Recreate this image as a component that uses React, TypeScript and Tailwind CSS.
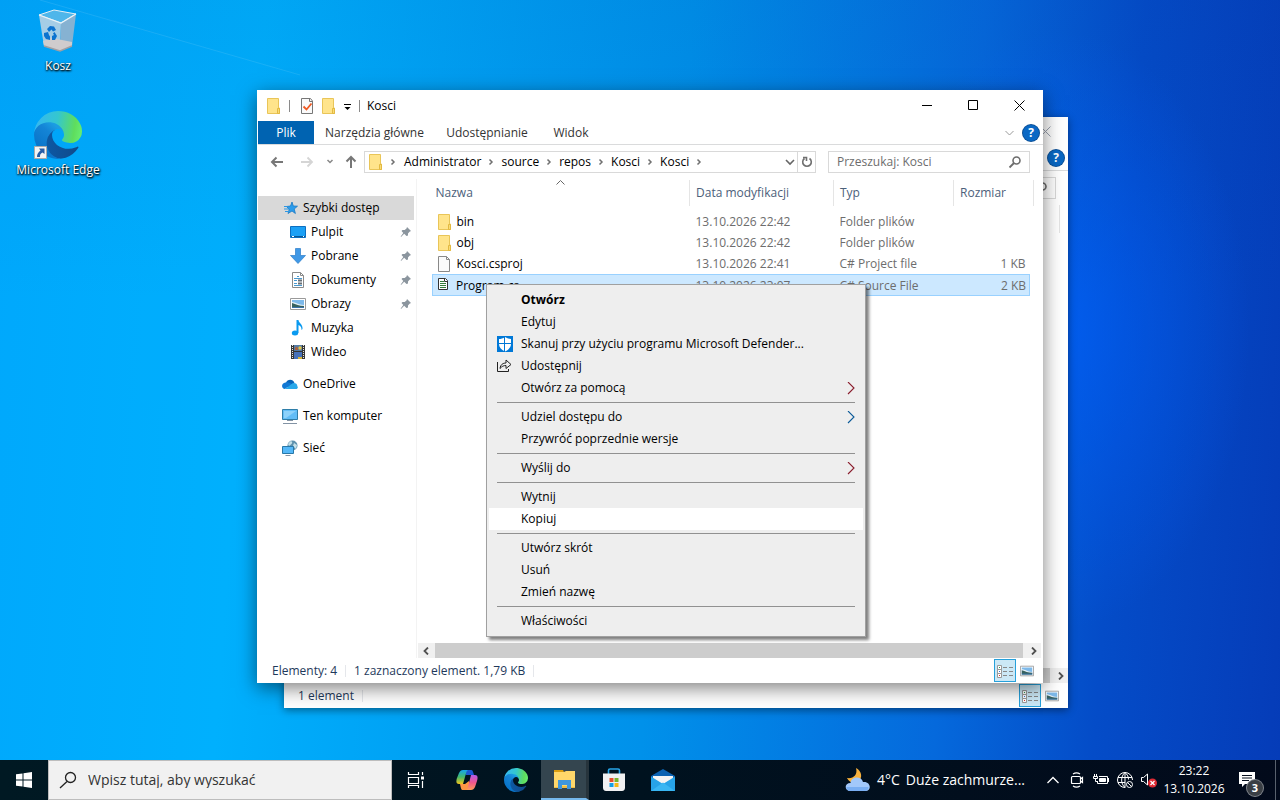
import { useId, type ReactNode } from 'react';

/* ---------- Icons ---------- */

function EdgeLogo({ className }: { className?: string }) {
  const id = useId();
  return (
    <svg viewBox="0 0 256 256" className={className} aria-hidden="true">
      <defs>
        <linearGradient id={`${id}a`} x1="60" y1="180" x2="235" y2="180" gradientUnits="userSpaceOnUse">
          <stop offset="0" stopColor="#0c59a4" />
          <stop offset="1" stopColor="#114a8b" />
        </linearGradient>
        <linearGradient id={`${id}b`} x1="140" y1="100" x2="40" y2="220" gradientUnits="userSpaceOnUse">
          <stop offset="0" stopColor="#1b9de2" />
          <stop offset="0.3" stopColor="#1484d6" />
          <stop offset="1" stopColor="#0873c8" />
        </linearGradient>
        <linearGradient id={`${id}c`} x1="10" y1="70" x2="250" y2="110" gradientUnits="userSpaceOnUse">
          <stop offset="0" stopColor="#35b8f0" />
          <stop offset="0.45" stopColor="#34c7cf" />
          <stop offset="0.85" stopColor="#5fdd5d" />
          <stop offset="1" stopColor="#66eb6e" />
        </linearGradient>
      </defs>
      <path
        fill={`url(#${id}a)`}
        d="M231 190.5c-3.4 1.8-6.9 3.4-10.5 4.7a101.8 101.8 0 0 1-35.9 6.5c-47.3 0-88.5-32.5-88.5-74.3a31.5 31.5 0 0 1 16.4-27.3c-42.8 1.8-53.8 46.4-53.8 72.5 0 74 68.1 81.4 82.8 81.4 7.9 0 19.8-2.3 27-4.6l1.3-.4a128.3 128.3 0 0 0 66.6-52.8 4 4 0 0 0-5.4-5.7Z"
      />
      <path
        fill={`url(#${id}b)`}
        d="M105.7 241.4A79.2 79.2 0 0 1 83 220.1a80.7 80.7 0 0 1 29.5-120c3.1-1.5 8.5-4.1 15.6-4a32.4 32.4 0 0 1 25.7 13 31.9 31.9 0 0 1 6.3 18.7c0-.2 24.5-79.6-80-79.6-43.9 0-80 41.7-80 78.2a130.2 130.2 0 0 0 12.1 56 128 128 0 0 0 156.4 67.1 75.6 75.6 0 0 1-62.9-8.1Z"
      />
      <path
        fill={`url(#${id}c)`}
        d="M152.3 148.9c-.8 1-3.3 2.5-3.3 5.6 0 2.6 1.7 5.1 4.8 7.3 14.3 10 41.4 8.6 41.5 8.6a59.6 59.6 0 0 0 30.3-8.3A61.4 61.4 0 0 0 256 109.2c.3-22.4-8-37.3-11.3-43.9C223.5 23.8 177.7 0 128 0A128 128 0 0 0 0 126.2c.5-36.5 36.8-66 80-66 3.5 0 23.5.3 42 10 16.3 8.6 24.9 19 30.9 29.2 6.1 10.7 7.2 24.2 7.2 29.6s-2.7 13.3-7.8 19.9Z"
      />
    </svg>
  );
}

function RecycleBin() {
  return (
    <svg viewBox="0 0 40 44" className="h-11 w-10" aria-hidden="true">
      <path d="M1 6 16 1l22 4-15 9Z" fill="#4fb6ea" stroke="#e4eef4" strokeWidth="1" />
      <path d="M1 6 23 14l-1 28L6 37Z" fill="#a5cde6" />
      <path d="M38 5 23 14l-1 28 12-5Z" fill="#86b2d2" />
      <path d="M5 32 14 29l20 4 0 4-12 5L6 37Z" fill="#d0cccd" />
      <path d="M6 37l16 5 12-5" fill="none" stroke="#a09fa3" strokeWidth="1.4" />
      <path d="M1 6 23 14l15-9" fill="none" stroke="#eaf3f8" strokeWidth="1.2" />
      <g fill="#0c73cf">
        <path d="m9 20 3-3 4 .5 2 3.500-3 1.500-1.500-2L11 23Z" />
        <path d="m16.500 23 2.500 4-2 4h-3v-4l2-1-1-1.500Z" />
        <path d="m6 24 4-1 1 3 1 1.500V31l-4-1-2-3Z" />
      </g>
    </svg>
  );
}

function FolderIcon() {
  return (
    <svg viewBox="0 0 16 16" className="size-4 shrink-0" aria-hidden="true">
      <path d="M1.500 .5h11v9.500h1v5.500h-12Z" fill="#ffe48b" stroke="#e9c558" />
      <path d="M11.500 10.500h2v5h-2Z" fill="#f8dc77" stroke="#e3b941" />
    </svg>
  );
}

function FileIcon() {
  return (
    <svg viewBox="0 0 16 16" className="size-4 shrink-0" aria-hidden="true">
      <path d="M1.500.5h8l3 3v12h-11Z" fill="#fafafa" stroke="#898989" />
      <path d="M9.500.5v3h3" fill="none" stroke="#898989" />
    </svg>
  );
}

function SourceIcon() {
  return (
    <svg viewBox="0 0 16 16" className="size-4 shrink-0" aria-hidden="true">
      <path d="M2.500 1.500h7l2 2v9h-9Z" fill="#fff" stroke="#333" />
      <path d="M4 4.500h4M4 6.500h6M4 8.500h6M4 10.500h6" stroke="#347d3b" />
      <path d="M8.500 1v3.500h3" fill="none" stroke="#333" />
    </svg>
  );
}

function PropertiesIcon() {
  return (
    <svg viewBox="0 0 16 16" className="size-4" aria-hidden="true">
      <path d="M2.500.5h9l2 2.500v12.500h-11Z" fill="#fafafa" stroke="#777" />
      <path d="M10.500.5v3h3" fill="none" stroke="#777" />
      <path d="m4.500 8.500 3 3 5-6" fill="none" stroke="#f05a23" strokeWidth="1.800" />
    </svg>
  );
}

function StarIcon() {
  return (
    <svg viewBox="0 0 16 16" className="size-4" aria-hidden="true">
      <path
        d="m9 2 1.300 4 4.200.2-3.300 2.800 1.200 4.500L9 11l-4 2.500L6.200 9.400 3.500 6.500l4-.5Z"
        fill="#2b9cec"
        stroke="#1879c4"
        strokeWidth=".8"
      />
      <path d="M1 6.500h4M1 9h5M2 11.500h4" stroke="#2d97e3" strokeWidth="1.200" />
    </svg>
  );
}

function DesktopIcon() {
  return (
    <svg viewBox="0 0 16 16" className="size-4" aria-hidden="true">
      <path d="M.5 2.500h15v11H.5Z" fill="#1ba0f5" stroke="#0d6fc0" />
      <path d="M1 12.500h14" stroke="#075796" />
      <path d="M2 12.500h2M13 12.500h1" stroke="#fff" />
    </svg>
  );
}

function DownloadIcon() {
  return (
    <svg viewBox="0 0 16 16" className="size-4" aria-hidden="true">
      <path d="M5.500.5h5v7h5L8 15.500.5 7.500h5Z" fill="#3f98e6" stroke="#2b7cc9" strokeWidth=".7" />
    </svg>
  );
}

function DocumentIcon() {
  return (
    <svg viewBox="0 0 16 16" className="size-4" aria-hidden="true">
      <path d="M2.500.5h8l3 3v12h-11Z" fill="#fff" stroke="#8a8a8a" />
      <path d="M10.500.5v3h3" fill="none" stroke="#8a8a8a" />
      <path d="M7 4.500h2M4 6.500h8M4 8.500h3M4 11.500h3M4 13.500h8" stroke="#4a99cf" />
      <path d="M8 8.500h4M8 11.500h4" stroke="#676f76" strokeWidth="2" />
    </svg>
  );
}

function PictureIcon({ className = 'size-4' }: { className?: string }) {
  return (
    <svg viewBox="0 0 16 16" className={className} aria-hidden="true">
      <path d="M.5 2.500h15v11H.5Z" fill="#fff" stroke="#9a9a9a" />
      <path d="M2 4h12v8H2Z" fill="#7db9ea" />
      <path d="M2 6c4 0 6 3 12 3v3H2Z" fill="#e3eff5" />
      <path d="M2 7c4 1 7 3 12 3v2H2Z" fill="#37615f" />
      <path d="M2 11h12v1H2Z" fill="#3972aa" />
    </svg>
  );
}

function MusicIcon() {
  return (
    <svg viewBox="0 0 16 16" className="size-4" aria-hidden="true">
      <ellipse cx="5" cy="13" rx="3.200" ry="2.500" fill="#0a9af0" />
      <path d="M6.500 0h2c0 3 4.500 4 4 9l-1 1c0-3-1-4-3-5v8h-2Z" fill="#0a9af0" />
    </svg>
  );
}

function VideoIcon() {
  return (
    <svg viewBox="0 0 16 16" className="size-4" aria-hidden="true">
      <path d="M1 1h14v14H1Z" fill="#353535" />
      <path d="M2.500 1v14M13.500 1v14" stroke="#e6e6e6" strokeDasharray="1 1" />
      <path d="M4 1h8v6H4Z" fill="#557ba4" />
      <path d="M4 8h8v7H4Z" fill="#4771b9" />
      <path d="M5 5c0-3 3-3 3 0v1H5Z" fill="#a96040" />
      <circle cx="10" cy="4" r="1.700" fill="#e3c644" />
      <path d="M8 13h4v2H8Z" fill="#d8b53a" />
    </svg>
  );
}

function OneDriveIcon() {
  return (
    <svg viewBox="0 0 16 16" className="size-4" aria-hidden="true">
      <path d="M4 7c1-4 7-4.500 8.500 0L9 11 2 11Z" fill="#0864b8" />
      <path d="M3.500 6.500c2-.8 4 .3 6 1.500L3 13C-1 12.500-1 7.200 3.500 6.500Z" fill="#1278d4" />
      <path d="M9.500 8c2.500-2 6-.3 5.800 2.200C16.500 11 15.500 13 14 13H3Z" fill="#28a8ea" />
    </svg>
  );
}

function ComputerIcon() {
  return (
    <svg viewBox="0 0 16 16" className="size-4" aria-hidden="true">
      <path d="M.5 1.500h15v10H.5Z" fill="#62bdf7" stroke="#2f7ea9" />
      <path d="M2 3h12L4 10H2Z" fill="#8dd2fb" />
      <path d="M5 12.500h6M1 15.500h14" stroke="#8393a4" />
    </svg>
  );
}

function NetworkIcon() {
  return (
    <svg viewBox="0 0 16 16" className="size-4" aria-hidden="true">
      <circle cx="10.500" cy="5.500" r="5" fill="#5d91ad" />
      <path d="M8 1.500c2-1 3 1 1.500 2.500L7 6 6 4ZM12 3l3 2-1 4-3-3Z" fill="#c6e1e9" />
      <path d="M.5 6.500h11v7H.5Z" fill="#55b8f8" stroke="#2878a8" />
      <path d="M3.500 15.500h5" stroke="#8393a4" />
    </svg>
  );
}

function PinIcon() {
  return (
    <svg viewBox="0 0 12 12" className="mr-1 size-3" aria-hidden="true">
      <path d="m7 1 4 4-1.500.7L8 7.500v2L6.500 10 4.200 7.800 1 11l-.3-.5 2.600-3.600L1.500 5 2.500 4h2.200L6.500 2.500Z" fill="#8b959e" />
    </svg>
  );
}

function Chevron({ className = '' }: { className?: string }) {
  return (
    <svg viewBox="0 0 8 8" className={`size-2 shrink-0 ${className}`} aria-hidden="true">
      <path d="m2.500 1.500 2.500 2.500-2.500 2.500" fill="none" stroke="#707070" strokeWidth="1.500" />
    </svg>
  );
}

function ScrollArrow({ flip = false }: { flip?: boolean }) {
  return (
    <svg viewBox="0 0 8 8" className={flip ? 'size-2 rotate-180' : 'size-2'} aria-hidden="true">
      <path d="M2 .5 5.500 4 2 7.500" fill="none" stroke="#505050" strokeWidth="1.800" />
    </svg>
  );
}

function SearchIcon({ className = 'size-4' }: { className?: string }) {
  return (
    <svg viewBox="0 0 16 16" className={className} aria-hidden="true">
      <circle cx="9.500" cy="6.500" r="3.500" fill="none" stroke="currentColor" strokeWidth="1.600" />
      <path d="M7 9 2.500 13.500" stroke="currentColor" strokeWidth="1.800" />
    </svg>
  );
}

function DefenderIcon() {
  return (
    <svg viewBox="0 0 16 16" className="size-4" aria-hidden="true">
      <path d="M0 0h16v16H0Z" fill="#0078d7" />
      <path d="M8 1c2 1.400 4 2 6 2v5c0 3-2 5.500-6 7.500C4 13.500 2 11 2 8V3c2 0 4-.6 6-2Z" fill="#fff" />
      <path d="M7.500 1v15M1 7.500h14" stroke="#0078d7" />
    </svg>
  );
}

function ShareIcon() {
  return (
    <svg viewBox="0 0 16 16" className="size-4" aria-hidden="true">
      <path d="M.5 4v9.500h11V11" fill="none" stroke="#222" />
      <path d="M3 10.500c.5-4 3-5.500 6-5.500V2l5 4.500-5 4v-3c-2.500 0-4 .8-6 3Z" fill="none" stroke="#222" />
    </svg>
  );
}

/* ---------- Window parts ---------- */

function CaptionButtons({ active }: { active: boolean }) {
  return (
    <div className={`ml-auto flex h-full items-center ${active ? 'mr-px text-black' : 'text-gray-400'}`}>
      {active && (
        <>
          <button className="flex h-full w-[46px] items-center justify-center" aria-label="Minimalizuj">
            <svg viewBox="0 0 11 11" className="size-[11px]"><path d="M0 5.500h10" stroke="currentColor" /></svg>
          </button>
          <button className="flex h-full w-[46px] items-center justify-center" aria-label="Maksymalizuj">
            <svg viewBox="0 0 11 11" className="size-[11px]"><path d="M.5.5h9v9H.5Z" fill="none" stroke="currentColor" /></svg>
          </button>
        </>
      )}
      <button className="flex h-full w-[46px] items-center justify-center" aria-label="Zamknij">
        <svg viewBox="0 0 11 11" className="size-[11px]"><path d="m.5.5 10 10M10.500.5l-10 10" stroke="currentColor" /></svg>
      </button>
    </div>
  );
}

function HelpButton() {
  return (
    <button
      className="mr-1 flex size-4 items-center justify-center rounded-full bg-[#0a68c4] text-[12px] leading-4 font-bold text-white ring-1 ring-[#0b4f96]"
      aria-label="Pomoc"
    >
      ?
    </button>
  );
}

function SearchBox({ placeholder }: { placeholder: string }) {
  return (
    <label className="flex h-[22px] w-[202px] items-center border border-[#d9d9d9] pr-[6px] pl-2 text-[#6d6d6d]">
      <input
        type="text"
        aria-label="Przeszukaj"
        placeholder={placeholder}
        className="w-full min-w-0 bg-transparent outline-none placeholder:text-[#6d6d6d]"
      />
      <SearchIcon className="size-4 shrink-0" />
    </label>
  );
}

function ScrollBar() {
  return (
    <div className="flex h-[15px] shrink-0 bg-[#f0f0f0]">
      <button className="flex w-[17px] items-center justify-center pr-[2px]" aria-label="Przewiń w lewo"><ScrollArrow flip /></button>
      <div className="flex-1 bg-[#cdcdcd]" />
      <button className="flex w-[18px] items-center justify-center pl-[3px]" aria-label="Przewiń w prawo"><ScrollArrow /></button>
    </div>
  );
}

function StatusBar({ items }: { items: string[] }) {
  return (
    <div className="flex h-[25px] shrink-0 items-center pl-[14px] text-[#1e395b]">
      {items.map((item) => (
        <span key={item} className="mr-2 border-r border-gray-200 pr-2 leading-3">{item}</span>
      ))}
      <div className="ml-auto flex h-full items-center gap-1 pr-[9px]">
        <button className="flex h-[23px] w-[22px] items-center justify-center border border-[#26a0da] bg-[#cbe8f6]" aria-label="Szczegóły">
          <svg viewBox="0 0 16 14" className="h-[14px] w-4">
            <path d="M.5 1.500h4v4h-4ZM.5 5.500h4v4h-4ZM.5 9.500h4v4h-4Z" fill="#fff" stroke="#999" />
            <path d="M6 3.500h4M12 3.500h4M6 7.500h4M12 7.500h4M6 11.500h4M12 11.500h4" stroke="#888" />
            <path d="M2 3.500h1" stroke="#2c9c54" />
            <path d="M2 7.500h1" stroke="#3373d7" />
            <path d="M2 11.500h1" stroke="#d33" />
          </svg>
        </button>
        <button aria-label="Duże ikony"><PictureIcon className="h-4 w-[14px]" /></button>
      </div>
    </div>
  );
}

/* ---------- File explorer ---------- */

const sidebarItems = [
  { label: 'Pulpit', icon: <DesktopIcon />, pinned: true },
  { label: 'Pobrane', icon: <DownloadIcon />, pinned: true },
  { label: 'Dokumenty', icon: <DocumentIcon />, pinned: true },
  { label: 'Obrazy', icon: <PictureIcon />, pinned: true },
  { label: 'Muzyka', icon: <MusicIcon />, pinned: false },
  { label: 'Wideo', icon: <VideoIcon />, pinned: false },
];

const sidebarRoots = [
  { label: 'OneDrive', icon: <OneDriveIcon /> },
  { label: 'Ten komputer', icon: <ComputerIcon /> },
  { label: 'Sieć', icon: <NetworkIcon /> },
];

const files = [
  { name: 'bin', date: '13.10.2026 22:42', type: 'Folder plików', size: '', icon: <FolderIcon /> },
  { name: 'obj', date: '13.10.2026 22:42', type: 'Folder plików', size: '', icon: <FolderIcon /> },
  { name: 'Kosci.csproj', date: '13.10.2026 22:41', type: 'C# Project file', size: '1 KB', icon: <FileIcon /> },
  { name: 'Program.cs', date: '13.10.2026 23:07', type: 'C# Source File', size: '2 KB', icon: <SourceIcon />, selected: true },
];

const path = ['Administrator', 'source', 'repos', 'Kosci', 'Kosci'];

function Sidebar() {
  return (
    <nav className="w-[159px] shrink-0 border-r border-[#f3f3f3] pt-[17px]">
      <a href="#quick" className="mr-[2px] flex h-6 items-center gap-1 bg-[#d9d9d9] pl-[25px]">
        <StarIcon />
        Szybki dostęp
      </a>
      {sidebarItems.map((item) => (
        <a key={item.label} href="#folder" className="flex h-6 items-center gap-[5px] pl-8">
          {item.icon}
          {item.label}
          {item.pinned && <span className="ml-auto"><PinIcon /></span>}
        </a>
      ))}
      {sidebarRoots.map((item) => (
        <a key={item.label} href="#root" className="mt-2 flex h-6 items-center gap-[5px] pl-6">
          {item.icon}
          {item.label}
        </a>
      ))}
    </nav>
  );
}

function FileTable() {
  return (
    <table className="ml-[15px] w-[602px] table-fixed text-left">
      <colgroup>
        <col className="w-[257px]" />
        <col className="w-[144px]" />
        <col className="w-[120px]" />
        <col className="w-[76px]" />
        <col />
      </colgroup>
      <thead>
        <tr className="h-[26px] text-[#4c607a]">
          <th className="relative border-r border-[#e5e5e5] pl-[3px] font-normal">
            Nazwa
            <svg viewBox="0 0 9 5" className="absolute top-0 left-[123px] h-[5px] w-[9px]" aria-hidden="true">
              <path d="m.5 4.500 4-4 4 4" fill="none" stroke="#666" />
            </svg>
          </th>
          <th className="border-r border-[#e5e5e5] pl-[6px] font-normal">Data modyfikacji</th>
          <th className="border-r border-[#e5e5e5] pl-[6px] font-normal">Typ</th>
          <th className="pl-[6px] font-normal">Rozmiar</th>
          <th className="border-r border-[#e5e5e5]" />
        </tr>
        <tr className="h-[5px]"><td colSpan={5} /></tr>
      </thead>
      <tbody>
        {files.map((file) => {
          const cell = file.selected ? 'border-y border-[#99d1ff] bg-[#cce8ff]' : '';
          return (
            <tr key={file.name} className={`h-[21px] ${file.selected ? 'leading-[19px]' : 'leading-[21px]'} text-[#6d6d6d]`}>
              <td className={`${cell} ${file.selected ? 'border-l pl-[3px]' : 'pl-1'} text-black`}>
                <span className="flex items-center gap-1">{file.icon}{file.name}</span>
              </td>
              <td className={`${cell} pl-[6px]`}>{file.date}</td>
              <td className={`${cell} pl-[6px]`}>{file.type}</td>
              <td className={`${cell} ${file.selected ? 'border-r pr-[3px]' : 'pr-1'} text-right`}>{file.size}</td>
            </tr>
          );
        })}
      </tbody>
    </table>
  );
}

function ExplorerWindow() {
  return (
    <section className="absolute top-[90px] left-[257px] flex h-[593px] w-[786px] flex-col border-l border-white bg-white shadow-[0_5px_18px_rgba(0,0,0,0.5)]">
      {/* Title bar */}
      <header className="flex h-[31px] shrink-0 items-center pl-2">
        <FolderIcon />
        <span className="mr-[9px] ml-[7px] h-3 w-px bg-[#8a8a8a]" />
        <PropertiesIcon />
        <span className="ml-[6px]"><FolderIcon /></span>
        <svg viewBox="0 0 9 7" className="mt-1 ml-[6px] h-[7px] w-[9px]" aria-hidden="true">
          <path d="M1 .5h7" stroke="#000" />
          <path d="M1.500 3h6l-3 3Z" />
        </svg>
        <span className="mr-[7px] ml-[7px] h-3 w-px bg-[#8a8a8a]" />
        Kosci
        <CaptionButtons active />
      </header>

      {/* Ribbon tabs */}
      <div className="flex h-6 shrink-0 items-center border-b border-[#dadbdc] text-[#333]">
        <button className="h-full w-14 bg-[#0063b1] text-white">Plik</button>
        <button className="w-[121px]">Narzędzia główne</button>
        <button className="w-[104px]">Udostępnianie</button>
        <button className="w-16">Widok</button>
        <button className="mr-[9px] ml-auto" aria-label="Rozwiń wstążkę">
          <svg viewBox="0 0 9 6" className="h-[6px] w-[9px]"><path d="m.5 1 4 4 4-4" fill="none" stroke="#999" /></svg>
        </button>
        <HelpButton />
      </div>

      {/* Address row */}
      <div className="flex h-[34px] shrink-0 items-center pr-[13px] pl-3">
        <button aria-label="Wstecz">
          <svg viewBox="0 0 14 12" className="h-3 w-[14px]"><path d="M13 6H2M6.500 1.500 2 6l4.500 4.500" fill="none" stroke="#777" strokeWidth="2" /></svg>
        </button>
        <button className="ml-4" aria-label="Dalej">
          <svg viewBox="0 0 14 12" className="h-3 w-[14px]"><path d="M1 6h11M7.500 1.500 12 6l-4.500 4.500" fill="none" stroke="#d5d5d5" strokeWidth="1.800" /></svg>
        </button>
        <button className="ml-3" aria-label="Ostatnie lokalizacje">
          <svg viewBox="0 0 8 6" className="h-[6px] w-2"><path d="m1.500 1 2.500 2.500L6.500 1" fill="none" stroke="#888" strokeWidth="1.500" /></svg>
        </button>
        <button className="ml-[11px]" aria-label="W górę">
          <svg viewBox="0 0 12 14" className="h-[14px] w-3"><path d="M6 13V2M1.500 6.500 6 2l4.500 4.500" fill="none" stroke="#777" strokeWidth="2" /></svg>
        </button>
        <div className="ml-[7px] flex h-[22px] flex-1 items-center border border-[#d9d9d9] pl-[3px]">
          <FolderIcon />
          <Chevron className="mx-[5px]" />
          {path.map((part, i) => (
            <span key={i} className="flex items-center">
              <button className="px-[2px]">{part}</button>
              <Chevron className="mx-[4px]" />
            </span>
          ))}
          <button className="mr-[2px] ml-auto" aria-label="Poprzednie lokalizacje">
            <svg viewBox="0 0 10 7" className="h-[7px] w-[10px]"><path d="m1 1 4 4 4-4" fill="none" stroke="#666" strokeWidth="1.600" /></svg>
          </button>
          <button className="flex h-full w-[18px] items-center justify-center border-l border-[#d9d9d9]" aria-label="Odśwież">
            <svg viewBox="0 0 12 12" className="size-3"><path d="M8.500 2.500a4.300 4.300 0 1 1-5 0M2 1.500h3.500V5" fill="none" stroke="#707070" strokeWidth="1.600" /></svg>
          </button>
        </div>
        <div className="ml-3"><SearchBox placeholder="Przeszukaj: Kosci" /></div>
      </div>

      {/* Folder contents */}
      <div className="flex min-h-0 flex-1">
        <Sidebar />
        <div className="flex min-w-0 flex-1 flex-col pt-px pr-[2px]">
          <FileTable />
          <div className="mt-auto pl-px"><ScrollBar /></div>
        </div>
      </div>
      <StatusBar items={['Elementy: 4', '1 zaznaczony element. 1,79 KB']} />
    </section>
  );
}

function BackgroundWindow() {
  return (
    <section className="absolute top-[117px] left-[284px] flex h-[591px] w-[784px] flex-col bg-white shadow-[0_2px_8px_rgba(0,0,0,0.45)]">
      <header className="flex h-[29px] shrink-0 items-center"><CaptionButtons active={false} /></header>
      <div className="flex h-[25px] shrink-0 items-center justify-end border-b border-[#dadbdc]">
        <HelpButton />
      </div>
      <div className="flex h-[34px] shrink-0 items-center justify-end pr-3"><SearchBox placeholder="" /></div>
      <div className="mr-2 h-7 border-r border-[#e5e5e5]" />
      <div className="mt-auto"><ScrollBar /></div>
      <StatusBar items={['1 element']} />
    </section>
  );
}

/* ---------- Context menu ---------- */

type MenuEntry = { label: string; bold?: boolean; icon?: ReactNode; submenu?: string; hover?: boolean };

const menuGroups: MenuEntry[][] = [
  [
    { label: 'Otwórz', bold: true },
    { label: 'Edytuj' },
    { label: 'Skanuj przy użyciu programu Microsoft Defender...', icon: <DefenderIcon /> },
    { label: 'Udostępnij', icon: <ShareIcon /> },
    { label: 'Otwórz za pomocą', submenu: '#8a1c2c' },
  ],
  [{ label: 'Udziel dostępu do', submenu: '#0b5a98' }, { label: 'Przywróć poprzednie wersje' }],
  [{ label: 'Wyślij do', submenu: '#8a1c2c' }],
  [{ label: 'Wytnij' }, { label: 'Kopiuj', hover: true }],
  [{ label: 'Utwórz skrót' }, { label: 'Usuń' }, { label: 'Zmień nazwę' }],
  [{ label: 'Właściwości' }],
];

function ContextMenu() {
  return (
    <div role="menu" className="absolute top-[284px] left-[486px] w-[380px] border border-[#a0a0a0] bg-[#eee] px-[2px] py-1 shadow-[3px_3px_3px_rgba(0,0,0,0.5)]">
      {menuGroups.map((group, i) => (
        <div key={i}>
          {i > 0 && <hr className="mx-2 my-[3px] border-t border-[#919191]" />}
          {group.map((entry) => (
            <button
              key={entry.label}
              role="menuitem"
              className={`flex h-[22px] w-full items-center pr-2 pl-2 ${entry.bold ? 'font-bold' : ''} ${entry.hover ? 'bg-white' : ''}`}
            >
              <span className="w-6">{entry.icon}</span>
              {entry.label}
              {entry.submenu && (
                <svg viewBox="0 0 8 13" className="ml-auto h-[13px] w-2" aria-hidden="true">
                  <path d="m1 0 6 6-6 6" fill="none" stroke={entry.submenu} strokeWidth="1.100" />
                </svg>
              )}
            </button>
          ))}
        </div>
      ))}
    </div>
  );
}

/* ---------- Taskbar ---------- */

function Taskbar() {
  return (
    <footer className="flex h-10 shrink-0 items-center bg-linear-to-r from-[#001923] via-[#00121f] to-[#020a1b] text-white">
      <button className="flex h-full w-12 items-center justify-center" aria-label="Start">
        <svg viewBox="0 0 16 16" className="size-4" fill="#fff">
          <path d="M0 2.300 6.500 1.400v6.100H0ZM7.500 1.200 16 0v7.500H7.500ZM0 8.500h6.500v6.100L0 13.700ZM7.500 8.500H16V16l-8.500-1.200Z" />
        </svg>
      </button>
      <label className="flex h-full w-[344px] items-center border border-[#bdbdbd] bg-[#f1f1f1] pl-[10px] text-[#222]">
        <svg viewBox="0 0 18 18" className="size-[18px] shrink-0" aria-hidden="true">
          <circle cx="11.500" cy="6.500" r="5" fill="none" stroke="#222" strokeWidth="1.300" />
          <path d="m8 10.500-7 6.500" stroke="#222" strokeWidth="1.300" />
        </svg>
        <input
          type="text"
          aria-label="Wyszukaj"
          placeholder="Wpisz tutaj, aby wyszukać"
          className="ml-[11px] min-w-0 flex-1 bg-transparent text-[14px] outline-none placeholder:text-[#333]"
        />
      </label>
      <button className="mr-[3px] flex h-full w-12 items-center justify-center" aria-label="Widok zadań">
        <svg viewBox="0 0 18 16" className="h-4 w-[18px]" fill="none" stroke="#fff">
          <path d="M1.500 0v2.500h10V0M1.500 5.500h10v6h-10ZM1.500 16v-2.500h10V16M15.500 0v3M15.500 9v7" strokeWidth="1.200" />
          <path d="M14 6h3" strokeWidth="3" />
        </svg>
      </button>
      <div className="flex h-full gap-px">
        <button className="flex w-12 items-center justify-center" aria-label="Copilot">
          <svg viewBox="0 0 24 24" className="size-6">
            <defs>
              <linearGradient id="copilot-left" x1="0" y1="0" x2="0" y2="1">
                <stop offset="0" stopColor="#14a6ef" />
                <stop offset=".5" stopColor="#44b96b" />
                <stop offset="1" stopColor="#f5c51b" />
              </linearGradient>
              <linearGradient id="copilot-right" x1="0" y1="0" x2="0" y2="1">
                <stop offset="0" stopColor="#b45bea" />
                <stop offset=".5" stopColor="#f0568e" />
                <stop offset="1" stopColor="#ff9b57" />
              </linearGradient>
            </defs>
            <path d="M8 2h8c2 0 2 2 3 5h-5l-3 0Z" fill="#1b57d2" />
            <path d="M8 2h5c-2 1-2 4-3 7l-2 7H4c-3 0-3-3-2-6l2-5c1-2 2-3 4-3Z" fill="url(#copilot-left)" />
            <path d="M16 22H8c-2 0-2-2-3-6h5l4-3Z" fill="#ff9545" />
            <path d="M16 22h-5c2-1 2-4 3-7l2-8h4c3 0 3 3 2 6l-2 6c-1 2-2 3-4 3Z" fill="url(#copilot-right)" />
          </svg>
        </button>
        <button className="flex w-12 items-center justify-center" aria-label="Edge"><EdgeLogo className="size-6" /></button>
        <button className="flex w-12 items-center justify-center border-r-[3px] border-b-[2px] border-r-[#27343c] border-b-[#76b9ed] bg-[#34454f]" aria-label="Eksplorator plików">
          <svg viewBox="0 0 24 20" className="h-5 w-6">
            <path d="M2 1h9l1 2H2Z" fill="#dc9e10" />
            <path d="M2 3h10l2-1h9v17H2Z" fill="#ffd76a" />
            <path d="M6 11h13v9h-4v-4h-5v4H6Z" fill="#3f96dc" />
            <path d="M2 18h4v1H2ZM19 18h4v1h-4ZM10 17h5v2h-5Z" fill="#f1bd43" />
          </svg>
        </button>
        <button className="flex w-12 items-center justify-center" aria-label="Sklep">
          <svg viewBox="0 0 24 24" className="size-6">
            <path d="M6.500 6V2.500c0-1 .5-1.500 1.500-1.500h8c1 0 1.500.5 1.500 1.500V6" fill="none" stroke="#26a5e8" strokeWidth="1.600" />
            <path d="M1 5.500h22v14c0 2-1 3.500-3 3.500H4c-2 0-3-1.500-3-3.500Z" fill="#f1f1f2" />
            <path d="M7.500 10h4v4h-4Z" fill="#e84e2c" />
            <path d="M12.500 10h4v4h-4Z" fill="#78b42c" />
            <path d="M7.500 15h4v4h-4Z" fill="#159fe6" />
            <path d="M12.500 15h4v4h-4Z" fill="#f8b714" />
          </svg>
        </button>
        <button className="flex w-12 items-center justify-center" aria-label="Poczta">
          <svg viewBox="0 0 24 24" className="size-6">
            <path d="M0 8 12 1l12 7v4H0Z" fill="#0b62b2" />
            <path d="M2 8h20v5l-10 4L2 13Z" fill="#f4f4f4" />
            <path d="M0 8.500 12 16l12-7.500V23H0Z" fill="#27a3e8" />
            <path d="m0 23 12-8.500L24 23Z" fill="#39b6f3" />
          </svg>
        </button>
      </div>

      {/* System tray */}
      <button className="ml-auto flex items-center text-[14px]">
        <svg viewBox="0 0 26 24" className="mr-[6px] h-6 w-[26px]" aria-hidden="true">
          <path d="M11 0c6 3 7 10 2 14-5 2-9 0-11-4 6 1 11-3 9-10Z" fill="#f7b13c" />
          <path d="M6 23c-7 0-7-8-.5-8 1-7 11-7 12.500-1 8-1 9 9 2.500 9Z" fill="#a2c8fa" />
          <path d="M6 23c-4 0-5-2-4.500-4h22c0 2-1 4-4 4Z" fill="#79aef2" />
        </svg>
        4°C<span className="ml-[6px]">Duże zachmurze...</span>
      </button>
      <div className="ml-5 flex items-center gap-2">
        <button aria-label="Pokaż ukryte ikony">
          <svg viewBox="0 0 16 16" className="size-4"><path d="M2.500 11 8 5.500l5.500 5.500" fill="none" stroke="#fff" strokeWidth="1.300" /></svg>
        </button>
        <button aria-label="Kamera">
          <svg viewBox="0 0 16 16" className="size-4" fill="none" stroke="#fff" strokeWidth="1.200">
            <path d="M3.500 4.500h7c1 0 1 .5 1 1v5c0 .7 0 1-1 1h-7c-.8 0-1-.3-1-1v-5c0-.7.3-1 1-1ZM11.500 7l2-1.500v5L11.500 9M4 2c2-1.300 5-1.300 7 0M4 14c2 1.300 5 1.300 7 0" />
          </svg>
        </button>
        <button aria-label="Bateria">
          <svg viewBox="0 0 16 16" className="size-4" fill="none" stroke="#fff">
            <path d="M6 4.500h8.500v7H4.500V9M15.500 6v4" />
            <path d="M6.500 6.500h6v3h-6Z" fill="#fff" />
            <path d="M1.500 2v2.500M3.500 2v2.500M.5 4.500h4v2h-4ZM2.500 7v2.500h2" />
          </svg>
        </button>
        <button aria-label="Sieć">
          <svg viewBox="0 0 16 16" className="size-4" fill="none" stroke="#fff">
            <path d="M15.500 8A7.500 7.500 0 1 0 8 15.500M8 .5c-4.500 4-4.500 11 0 15M8 .5c2.500 2 3.500 4.500 3.500 7M1 5.500h14M1 10.500h7M8 .5v15" />
            <circle cx="12.500" cy="12.500" r="3" />
            <path d="m10.500 10.500 4 4" />
          </svg>
        </button>
        <button aria-label="Głośność">
          <svg viewBox="0 0 16 16" className="size-4">
            <path d="M.5 5.500h2l4-3.500v11l-4-3.500h-2Z" fill="none" stroke="#fff" />
            <circle cx="11.500" cy="11" r="4.500" fill="#e02b35" />
            <path d="m9.500 9 4 4M13.500 9l-4 4" stroke="#fff" strokeWidth="1.200" />
          </svg>
        </button>
      </div>
      <button className="ml-[6px] w-[62px] text-center leading-[18px] whitespace-nowrap">
        <span className="block">23:22</span>
        <span className="block">13.10.2026</span>
      </button>
      <button className="relative ml-[14px] flex h-full w-6 items-center" aria-label="Powiadomienia">
        <svg viewBox="0 0 16 16" className="size-4">
          <path d="M0 0h16v12H6l-3 3v-3H0Z" fill="#fff" />
          <path d="M3 3.500h10M3 6h10M3 8.500h7" stroke="#06101f" />
        </svg>
        <span className="absolute right-0 bottom-[4px] size-4 rounded-full bg-[#3a3f45] text-center text-[11px] leading-4 font-bold ring-1 ring-[#80858c]">3</span>
      </button>
      <button className="ml-3 h-full w-[5px] border-l border-[#59616d]" aria-label="Pokaż pulpit" />
    </footer>
  );
}

/* ---------- Desktop ---------- */

function WallpaperRays() {
  return (
    <svg viewBox="0 0 1280 760" preserveAspectRatio="none" className="absolute inset-0 size-full" aria-hidden="true">
      <path d="m40 0 260 75" stroke="#fff" opacity=".1" />
      <path d="M40 0 300 75 300 400 0 400 0 0Z" fill="#00b0ff" opacity=".12" />
    </svg>
  );
}

export default function App() {
  return (
    <div className="flex h-screen flex-col overflow-hidden font-['Open_Sans','Noto_Sans',sans-serif] text-[12px] leading-4 text-black">
      <main className="relative min-h-0 flex-1 bg-[radial-gradient(ellipse_190px_300px_at_1060px_330px,rgba(0,95,250,0.7),transparent),linear-gradient(to_bottom,rgba(0,40,130,0.07),transparent_40%),linear-gradient(94deg,#00a8fc_0%,#00b0fd_20%,#0091ea_52%,#0569dc_74%,#044cc8_86%,#053cb8_100%)]">
        <WallpaperRays />
        <div className="relative flex w-[116px] flex-col items-center pt-[9px] text-white">
          <button className="flex h-[102px] flex-col items-center">
            <RecycleBin />
            <span className="mt-[5px] [text-shadow:0_1px_2px_#000,1px_1px_2px_#000]">Kosz</span>
          </button>
          <button className="relative flex flex-col items-center whitespace-nowrap">
            <EdgeLogo className="size-12" />
            <svg viewBox="0 0 13 13" className="absolute top-[35px] left-[18px] size-[13px]" aria-hidden="true">
              <path d="M.5.5h12v12H.5Z" fill="#f4f4f4" stroke="#aaa" />
              <path d="M5 2.500h5.500V8L8.500 6.500C6 8 6 9 6 11H3c0-3 1-4.500 3.500-6.500Z" fill="#285da6" />
            </svg>
            <span className="mt-[3px] [text-shadow:0_1px_2px_#000,1px_1px_2px_#000]">Microsoft Edge</span>
          </button>
        </div>
        <BackgroundWindow />
        <ExplorerWindow />
        <ContextMenu />
      </main>
      <Taskbar />
    </div>
  );
}
